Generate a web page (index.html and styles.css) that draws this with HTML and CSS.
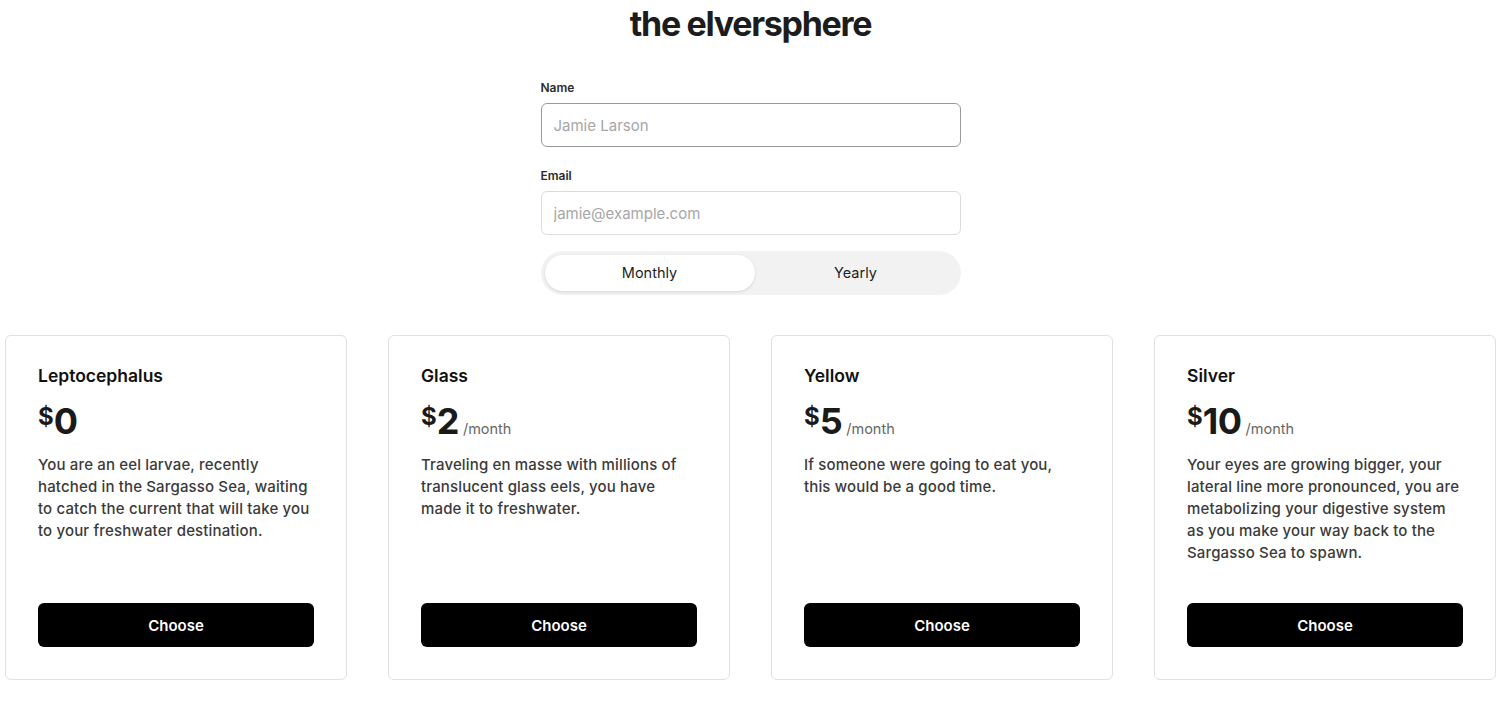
FILE: index.html
```html
<!DOCTYPE html>
<html>
<head>
    <title>the elversphere</title>
    <link rel="stylesheet" href="styles.css">
</head>
<body>
    <h1 class="brand">the elversphere</h1>

    <form class="signup">
        <label class="field-label" for="name">Name</label>
        <input id="name" class="field-input field-focus" type="text" placeholder="Jamie Larson">

        <label class="field-label" for="email">Email</label>
        <input id="email" class="field-input" type="email" placeholder="jamie@example.com">

        <div class="toggle">
            <button type="button" class="toggle-option active">Monthly</button>
            <button type="button" class="toggle-option">Yearly</button>
        </div>
    </form>

    <div class="plans">
        <div class="plan">
            <h2 class="plan-name">Leptocephalus</h2>
            <div class="plan-price"><span class="currency">$</span><span class="amount">0</span></div>
            <p class="plan-text">You are an eel larvae, recently hatched in the Sargasso Sea, waiting to catch the current that will take you to your freshwater destination.</p>
            <button class="choose">Choose</button>
        </div>
        <div class="plan">
            <h2 class="plan-name">Glass</h2>
            <div class="plan-price"><span class="currency">$</span><span class="amount">2</span><span class="period">/month</span></div>
            <p class="plan-text">Traveling en masse with millions of translucent glass eels, you have made it to freshwater.</p>
            <button class="choose">Choose</button>
        </div>
        <div class="plan">
            <h2 class="plan-name">Yellow</h2>
            <div class="plan-price"><span class="currency">$</span><span class="amount">5</span><span class="period">/month</span></div>
            <p class="plan-text">If someone were going to eat you, this would be a good time.</p>
            <button class="choose">Choose</button>
        </div>
        <div class="plan">
            <h2 class="plan-name">Silver</h2>
            <div class="plan-price"><span class="currency">$</span><span class="amount">10</span><span class="period">/month</span></div>
            <p class="plan-text">Your eyes are growing bigger, your lateral line more pronounced, you are metabolizing your digestive system as you make your way back to the Sargasso Sea to spawn.</p>
            <button class="choose">Choose</button>
        </div>
    </div>
</body>
</html>
```

FILE: styles.css
```css
body { font-family: Inter, "Noto Sans", sans-serif; margin: 0; padding: 0 7px 0 5px; color: #1a1a1a; background: #fff; }
.brand { margin: 4px 0 0; text-align: center; font-size: 34px; font-weight: 700; letter-spacing: -1.3px; line-height: 40px; color: #1c1c1c; }

.signup { width: 420px; margin: 36px auto 0; display: flex; flex-direction: column; }
.field-label { font-size: 12px; font-weight: 600; color: #2b2b2b; line-height: 16px; margin-bottom: 7px; }
.field-input { box-sizing: border-box; height: 44px; border: 1px solid #dcdcdc; border-radius: 6px; padding: 0 12px; font-family: inherit; font-size: 15px; color: #222; margin-bottom: 20px; outline: none; }
.field-input::placeholder { color: #a6a6a6; }
.field-focus { border-color: #9a9a9a; margin-bottom: 21px; }
.toggle { display: flex; background: #f2f2f2; border-radius: 22px; padding: 4px; height: 44px; box-sizing: border-box; margin-top: -4px; }
.toggle-option { flex: 1; border: none; background: transparent; border-radius: 18px; font-family: inherit; font-size: 14.5px; font-weight: 400; color: #1e1e1e; cursor: pointer; padding-bottom: 2px; }
.toggle-option.active { flex: 0 0 210px; background: #fff; box-shadow: 0 1px 3px rgba(0,0,0,0.12); }

.plans { display: flex; gap: 41px; margin-top: 40px; }
.plan { box-sizing: border-box; width: 342px; height: 345px; border: 1px solid #e0e0e0; border-radius: 6px; padding: 28px 32px 32px; display: flex; flex-direction: column; }
.plan-name { margin: 0; font-size: 17.5px; font-weight: 600; line-height: 24px; color: #111; }
.plan-price { margin-top: 13px; display: flex; align-items: baseline; color: #1a1a1a; }
.currency { font-size: 24px; font-weight: 700; align-self: flex-start; line-height: 24px; margin-top: 4px; }
.amount { font-size: 36px; font-weight: 700; line-height: 40px; letter-spacing: -0.5px; }
.period { font-size: 14.5px; color: #666; margin-left: 4px; }
.plan-text { margin: 13px 0 0; font-size: 15px; font-weight: 500; line-height: 22px; letter-spacing: 0.15px; color: #3a3a3a; flex: 1; }
.choose { height: 44px; border: none; border-radius: 6px; background: #000; color: #fff; font-family: inherit; font-size: 15px; font-weight: 600; cursor: pointer; }
```
